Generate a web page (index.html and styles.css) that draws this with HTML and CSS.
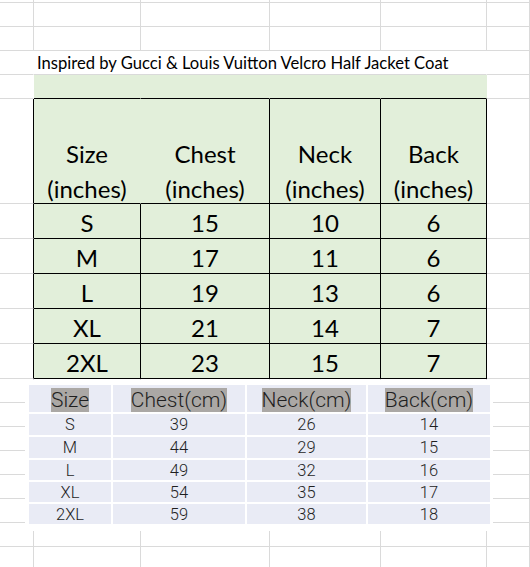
FILE: index.html
```html
<!DOCTYPE html>
<html>
<head>
<meta charset="utf-8">
<link rel="stylesheet" href="styles.css">
</head>
<body>
<div class="sheet">
  <div class="row h3"><div class="c"></div><div class="c"></div><div class="c"></div><div class="c"></div><div class="c"></div><div class="c"></div></div>
  <div class="row h24"><div class="c"></div><div class="c"></div><div class="c"></div><div class="c"></div><div class="c"></div><div class="c"></div></div>
  <div class="row h24"><div class="c"></div><div class="c"></div><div class="c"></div><div class="c"></div><div class="c"></div><div class="c"></div></div>
  <div class="row h24">
    <div class="c no-r"></div>
    <div class="c title no-r">Inspired by Gucci &amp; Louis Vuitton Velcro Half Jacket Coat</div>
    <div class="c"></div>
  </div>
  <div class="row h24">
    <div class="c no-r"></div>
    <div class="c band"></div><div class="c band"></div><div class="c band"></div><div class="c band"></div>
    <div class="c"></div>
  </div>
  <div class="row h105">
    <div class="c edge"></div>
    <div class="c t head merged"><span>Size</span><span>(inches)</span></div>
    <div class="c t head"><span>Chest</span><span>(inches)</span></div>
    <div class="c t head"><span>Neck</span><span>(inches)</span></div>
    <div class="c t head"><span>Back</span><span>(inches)</span></div>
    <div class="c"></div>
  </div>
  <div class="row h35"><div class="c edge"></div><div class="c t">S</div><div class="c t">15</div><div class="c t">10</div><div class="c t">6</div><div class="c"></div></div>
  <div class="row h35"><div class="c edge"></div><div class="c t">M</div><div class="c t">17</div><div class="c t">11</div><div class="c t">6</div><div class="c"></div></div>
  <div class="row h35"><div class="c edge"></div><div class="c t">L</div><div class="c t">19</div><div class="c t">13</div><div class="c t">6</div><div class="c"></div></div>
  <div class="row h35"><div class="c edge"></div><div class="c t">XL</div><div class="c t">21</div><div class="c t">14</div><div class="c t">7</div><div class="c"></div></div>
  <div class="row h35"><div class="c edge"></div><div class="c t">2XL</div><div class="c t">23</div><div class="c t">15</div><div class="c t">7</div><div class="c"></div></div>
  <div class="row h24"><div class="c"></div><div class="c"></div><div class="c"></div><div class="c"></div><div class="c"></div><div class="c"></div></div>
  <div class="row h24"><div class="c"></div><div class="c"></div><div class="c"></div><div class="c"></div><div class="c"></div><div class="c"></div></div>
  <div class="row h24"><div class="c"></div><div class="c"></div><div class="c"></div><div class="c"></div><div class="c"></div><div class="c"></div></div>
  <div class="row h24"><div class="c"></div><div class="c"></div><div class="c"></div><div class="c"></div><div class="c"></div><div class="c"></div></div>
  <div class="row h24"><div class="c"></div><div class="c"></div><div class="c"></div><div class="c"></div><div class="c"></div><div class="c"></div></div>
  <div class="row h24"><div class="c"></div><div class="c"></div><div class="c"></div><div class="c"></div><div class="c"></div><div class="c"></div></div>
  <div class="row h24"><div class="c"></div><div class="c"></div><div class="c"></div><div class="c"></div><div class="c"></div><div class="c"></div></div>
  <div class="row h24"><div class="c"></div><div class="c"></div><div class="c"></div><div class="c"></div><div class="c"></div><div class="c"></div></div>

  <div class="picture">
    <div class="cm">
      <div class="ch"><span>Size</span></div>
      <div class="ch"><span>Chest(cm)</span></div>
      <div class="ch"><span>Neck(cm)</span></div>
      <div class="ch"><span>Back(cm)</span></div>
      <div class="cd">S</div><div class="cd">39</div><div class="cd">26</div><div class="cd">14</div>
      <div class="cd">M</div><div class="cd">44</div><div class="cd">29</div><div class="cd">15</div>
      <div class="cd">L</div><div class="cd">49</div><div class="cd">32</div><div class="cd">16</div>
      <div class="cd">XL</div><div class="cd">54</div><div class="cd">35</div><div class="cd">17</div>
      <div class="cd">2XL</div><div class="cd">59</div><div class="cd">38</div><div class="cd">18</div>
    </div>
  </div>
</div>
</body>
</html>
```

FILE: styles.css
```css
* { box-sizing: border-box; }
body {
  margin: 0;
  background: #fff;
  font-family: Lato, "Liberation Sans", sans-serif;
  color: #000;
}
.sheet {
  position: relative;
  width: 530px;
  height: 567px;
  overflow: hidden;
}
.row {
  display: grid;
  grid-template-columns: 34px 107px 129px 111px 106px 1fr;
}
.h3 { height: 3px; }
.h24 { height: 24px; }
.h35 { height: 35px; }
.h105 { height: 105px; }
.c {
  border-right: 1px solid #dadada;
  border-bottom: 1px solid #dadada;
}
.no-r { border-right-color: transparent; }
.title {
  grid-column: span 4;
  font-size: 16.6px;
  line-height: 20px;
  padding: 2px 0 0 3px;
  white-space: nowrap;
}
.band {
  background: #e2efda;
  border-right-color: transparent;
  border-bottom-color: #000;
}
.edge { border-right-color: #000; }
.t {
  background: #e2efda;
  border-color: #000;
  display: flex;
  justify-content: center;
  align-items: flex-end;
  padding-bottom: 1px;
  font-size: 24px;
  line-height: 28px;
}
.head {
  flex-direction: column;
  align-items: center;
  justify-content: flex-end;
  gap: 7px;
  padding-bottom: 0;
}
.merged { border-right-color: transparent; }

.picture {
  position: absolute;
  left: 25px;
  top: 380px;
  width: 468px;
  height: 151px;
  background: #fff;
  padding: 5px 3px 6px 4px;
}
.cm {
  display: grid;
  grid-template-columns: 82px 132px 119px 122px;
  grid-template-rows: 27px 21px 21px 20px 20px 20px;
  gap: 2px;
  font-family: Roboto, "Liberation Sans", sans-serif;
  font-weight: 300;
  color: #1f1f1f;
}
.ch, .cd {
  background: #e9ebf5;
  text-align: center;
}
.ch {
  font-size: 21px;
  line-height: 24px;
  padding-top: 3px;
}
.ch span { background: #aba8a5; }
.cd {
  font-size: 16.5px;
  line-height: 21px;
}
```
